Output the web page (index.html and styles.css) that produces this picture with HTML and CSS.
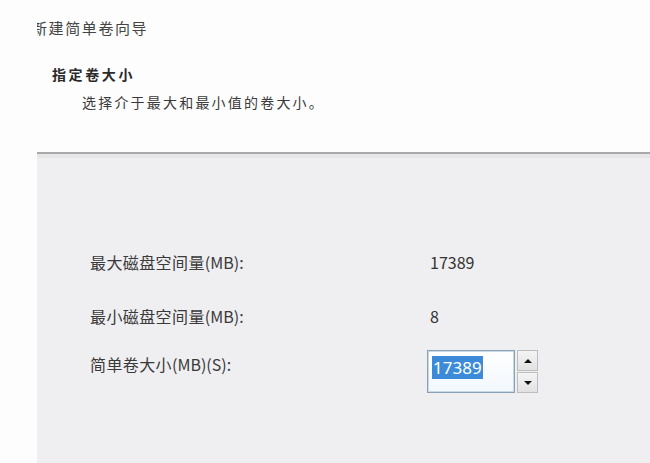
FILE: index.html
```html
<!DOCTYPE html>
<html lang="zh-CN">
<head>
<meta charset="utf-8">
<title>新建简单卷向导</title>
<link rel="stylesheet" href="styles.css">
</head>
<body>
<div class="dialog">
  <header class="head">
    <div class="title">新建简单卷向导</div>
    <div class="heading">指定卷大小</div>
    <div class="subtitle">选择介于最大和最小值的卷大小。</div>
  </header>
  <div class="sep"></div>
  <main class="body">
    <div class="row row-first">
      <div class="label"><span class="cjk">最大磁盘空间量</span>(MB):</div>
      <div class="value">17389</div>
    </div>
    <div class="row row-second">
      <div class="label"><span class="cjk">最小磁盘空间量</span>(MB):</div>
      <div class="value">8</div>
    </div>
    <div class="row row-third">
      <div class="label label-spin"><span class="cjk">简单卷大小</span>(MB)(S):</div>
      <div class="spin">
        <div class="spin-field"><span class="sel">17389</span></div>
        <div class="spin-btns">
          <div class="spin-btn"><span class="tri-up"></span></div>
          <div class="spin-btn"><span class="tri-down"></span></div>
        </div>
      </div>
    </div>
  </main>
</div>
</body>
</html>
```
FILE: styles.css
```css
html, body {
  margin: 0;
  padding: 0;
  background: #fdfdfd;
  width: 650px;
  height: 463px;
  overflow: hidden;
  font-family: "Noto Sans CJK SC", "Noto Sans", sans-serif;
  color: #383838;
}
.dialog {
  margin-left: 37px;
  height: 463px;
  overflow: hidden;
  display: flex;
  flex-direction: column;
}
.head {
  height: 152px;
  background: #fdfdfd;
  box-sizing: border-box;
  padding-top: 17px;
}
.title {
  font-size: 15px;
  line-height: 22px;
  letter-spacing: 1.6px;
  margin-left: -5px;
  color: #444;
}
.heading {
  font-size: 14px;
  line-height: 22px;
  font-weight: bold;
  letter-spacing: 2.6px;
  margin-top: 24px;
  margin-left: 15px;
  color: #2a2a2a;
}
.subtitle {
  font-size: 14px;
  line-height: 22px;
  letter-spacing: 2.2px;
  margin-top: 6px;
  margin-left: 45px;
  color: #3a3a3a;
}
.sep {
  height: 2px;
  background: #a9a9a9;
  border-bottom: 4px solid #e6e6e8;
}
.body {
  flex: 1;
  background: #efeef1;
  padding-top: 92px;
  padding-left: 53px;
}
.row {
  display: flex;
  align-items: flex-start;
}
.row-second { margin-top: 30px; }
.row-third { margin-top: 22px; }
.label {
  width: 340px;
  font-size: 16px;
  line-height: 24px;
  color: #3a3a3a;
}
.cjk {
  letter-spacing: 0.4px;
}
.label-spin { margin-top: 2px; }
.value {
  font-size: 16px;
  line-height: 24px;
  color: #333;
}
.spin {
  display: flex;
  margin-left: -3px;
}
.spin-field {
  width: 86px;
  height: 41px;
  border: 1px solid #8aa2b4;
  box-shadow: inset 0 0 0 1px #c9d8e4;
  background: linear-gradient(#ffffff, #f2f8fd);
}
.sel {
  display: inline-block;
  margin: 5px 0 0 4px;
  padding: 0 1px;
  background: #3d8bd8;
  color: #fff;
  font-family: "Noto Sans", sans-serif;
  font-size: 17px;
  line-height: 23px;
}
.spin-btns {
  display: flex;
  flex-direction: column;
  margin-left: 2px;
  gap: 1px;
}
.spin-btn {
  width: 19px;
  height: 19px;
  border: 1px solid #bdbdbd;
  background: linear-gradient(#f4f4f4, #e2e2e2);
  display: flex;
  align-items: center;
  justify-content: center;
}
.tri-up {
  width: 0;
  height: 0;
  border-left: 4px solid transparent;
  border-right: 4px solid transparent;
  border-bottom: 4px solid #111;
}
.tri-down {
  width: 0;
  height: 0;
  border-left: 4px solid transparent;
  border-right: 4px solid transparent;
  border-top: 4px solid #111;
}
```
